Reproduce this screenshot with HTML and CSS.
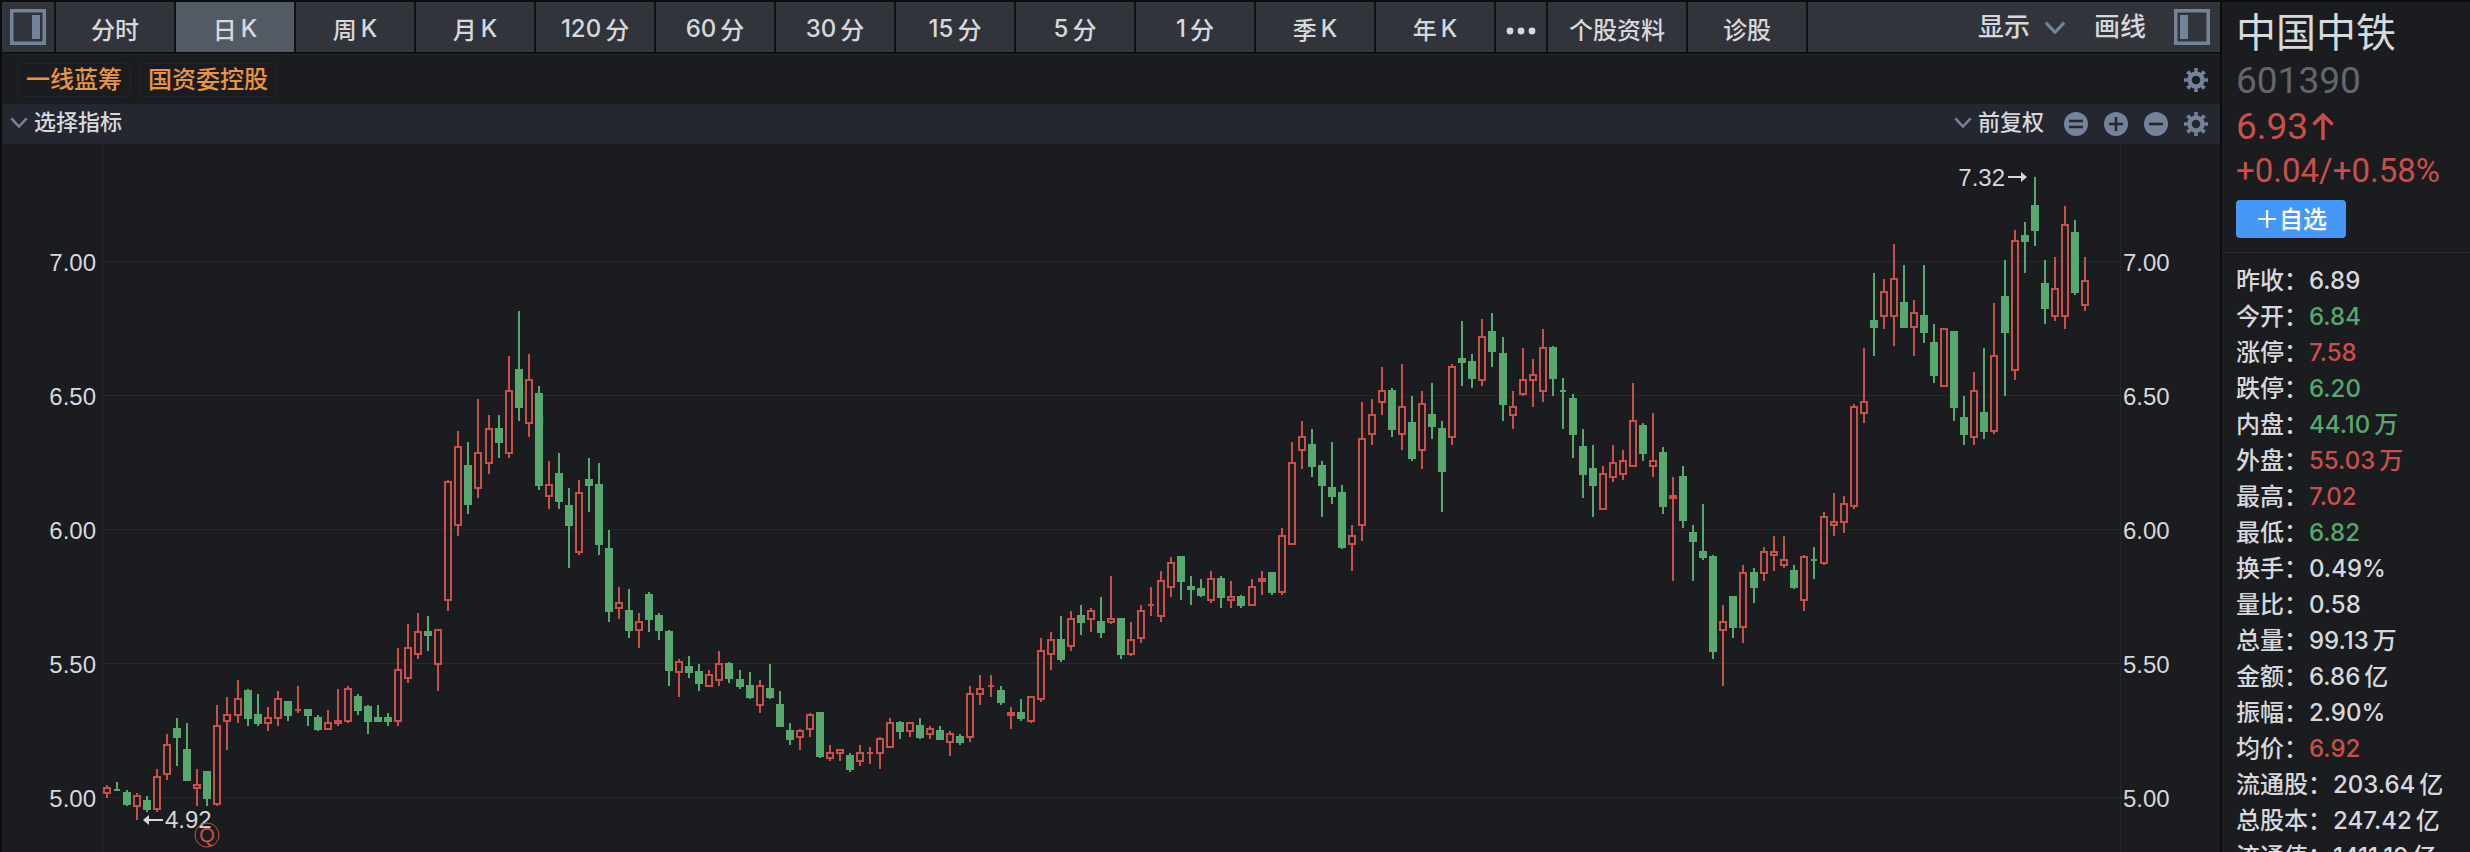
FILE: index.html
```
<!DOCTYPE html>
<html lang="zh-CN">
  <head>
    <meta charset="UTF-8" />
    <meta name="viewport" content="width=device-width, initial-scale=1.0" />
    <title>中国中铁 601390</title>
    <link rel="stylesheet" href="styles.css" />
  </head>
  <body>
    <!-- 公用图标 -->
    <svg class="defs" aria-hidden="true">
      <symbol id="gear" viewBox="0 0 24 24">
        <circle cx="12" cy="12" r="6.5" fill="none" stroke="currentColor" stroke-width="4.4" />
        <circle cx="12" cy="12" r="10" fill="none" stroke="currentColor" stroke-width="4"
          pathLength="16" stroke-dasharray="0.9 1.1" stroke-dashoffset="0.45" />
      </symbol>
      <symbol id="chevron" viewBox="0 0 20 12">
        <path d="M1.5 1.5 10 10.5 18.5 1.5" fill="none" stroke="currentColor" stroke-width="2.8" />
      </symbol>
    </svg>

    <div class="page">
      <main class="main">
        <!-- 周期切换 -->
        <nav class="toolbar">
          <button class="tab tab-icon" aria-label="左侧栏">
            <svg width="36" height="36" viewBox="0 0 36 36">
              <rect x="1.75" y="1.75" width="32.5" height="32.5" fill="none" stroke="currentColor" stroke-width="3.5" />
              <rect x="22" y="6" width="8" height="24" fill="currentColor" />
            </svg>
          </button>
          <button class="tab">分时</button>
          <button class="tab active">日<span>K</span></button>
          <button class="tab">周<span>K</span></button>
          <button class="tab">月<span>K</span></button>
          <button class="tab">120<span>分</span></button>
          <button class="tab">60<span>分</span></button>
          <button class="tab">30<span>分</span></button>
          <button class="tab">15<span>分</span></button>
          <button class="tab">5<span>分</span></button>
          <button class="tab">1<span>分</span></button>
          <button class="tab">季<span>K</span></button>
          <button class="tab">年<span>K</span></button>
          <button class="tab tab-more" aria-label="更多">
            <svg width="30" height="8" viewBox="0 0 30 8" fill="currentColor">
              <circle cx="4" cy="4" r="3.4" />
              <circle cx="15" cy="4" r="3.4" />
              <circle cx="26" cy="4" r="3.4" />
            </svg>
          </button>
          <button class="tab tab-info">个股资料</button>
          <button class="tab">诊股</button>
          <div class="tools">
            <button class="tool">
              显示
              <svg class="muted" width="22" height="13"><use href="#chevron" /></svg>
            </button>
            <button class="tool">画线</button>
            <button class="tool muted" aria-label="右侧栏">
              <svg width="36" height="36" viewBox="0 0 36 36">
                <rect x="1.75" y="1.75" width="32.5" height="32.5" fill="none" stroke="currentColor" stroke-width="3.5" />
                <rect x="6" y="6" width="8" height="24" fill="currentColor" />
              </svg>
            </button>
          </div>
        </nav>

        <!-- 标签 -->
        <div class="tags">
          <a class="tag" href="#">一线蓝筹</a>
          <a class="tag" href="#">国资委控股</a>
          <button class="icon-btn push" aria-label="标签设置">
            <svg width="24" height="24"><use href="#gear" /></svg>
          </button>
        </div>

        <!-- 指标 -->
        <div class="indicator">
          <button class="pick">
            <svg class="muted" width="18" height="11"><use href="#chevron" /></svg>
            选择指标
          </button>
          <div class="actions">
            <button class="pick">
              <svg class="muted" width="18" height="11"><use href="#chevron" /></svg>
              前复权
            </button>
            <button class="icon-btn" aria-label="还原">
              <svg width="24" height="24" viewBox="0 0 24 24">
                <circle cx="12" cy="12" r="12" fill="currentColor" />
                <path d="M5 9h14M5 15h14" stroke="#24272f" stroke-width="2.4" />
              </svg>
            </button>
            <button class="icon-btn" aria-label="放大">
              <svg width="24" height="24" viewBox="0 0 24 24">
                <circle cx="12" cy="12" r="12" fill="currentColor" />
                <path d="M5 12h14M12 5v14" stroke="#24272f" stroke-width="2.6" />
              </svg>
            </button>
            <button class="icon-btn" aria-label="缩小">
              <svg width="24" height="24" viewBox="0 0 24 24">
                <circle cx="12" cy="12" r="12" fill="currentColor" />
                <path d="M5 12h14" stroke="#24272f" stroke-width="2.6" />
              </svg>
            </button>
            <button class="icon-btn" aria-label="指标设置">
              <svg width="24" height="24"><use href="#gear" /></svg>
            </button>
          </div>
        </div>

        <!-- K 线图 -->
        <div class="chart">
          <svg id="kline" role="img" aria-label="日K线"></svg>
        </div>
      </main>

      <!-- 右侧报价 -->
      <aside class="quote">
        <header class="head">
          <h1 class="name">中国中铁</h1>
          <div class="code">601390</div>
          <div class="price up">
            6.93<svg width="22" height="28" viewBox="0 0 22 28">
              <path d="M11 27V2M1.5 11.5 11 2l9.5 9.5" fill="none" stroke="currentColor" stroke-width="3.4" />
            </svg>
          </div>
          <div class="change up">+0.04/+0.58%</div>
          <button class="add">＋自选</button>
        </header>
        <dl class="list">
          <div class="row"><dt>昨收：</dt><dd>6.89</dd></div>
          <div class="row"><dt>今开：</dt><dd class="down">6.84</dd></div>
          <div class="row"><dt>涨停：</dt><dd class="up">7.58</dd></div>
          <div class="row"><dt>跌停：</dt><dd class="down">6.20</dd></div>
          <div class="row"><dt>内盘：</dt><dd class="down">44.10<span>万</span></dd></div>
          <div class="row"><dt>外盘：</dt><dd class="up">55.03<span>万</span></dd></div>
          <div class="row"><dt>最高：</dt><dd class="up">7.02</dd></div>
          <div class="row"><dt>最低：</dt><dd class="down">6.82</dd></div>
          <div class="row"><dt>换手：</dt><dd>0.49%</dd></div>
          <div class="row"><dt>量比：</dt><dd>0.58</dd></div>
          <div class="row"><dt>总量：</dt><dd>99.13<span>万</span></dd></div>
          <div class="row"><dt>金额：</dt><dd>6.86<span>亿</span></dd></div>
          <div class="row"><dt>振幅：</dt><dd>2.90%</dd></div>
          <div class="row"><dt>均价：</dt><dd class="up">6.92</dd></div>
          <div class="row"><dt>流通股：</dt><dd>203.64<span>亿</span></dd></div>
          <div class="row"><dt>总股本：</dt><dd>247.42<span>亿</span></dd></div>
          <div class="row"><dt>流通值：</dt><dd>1411.19<span>亿</span></dd></div>
        </dl>
      </aside>
    </div>
    <script src="kline.js"></script>
  </body>
</html>
```

FILE: styles.css
```
* {
  margin: 0;
  padding: 0;
  box-sizing: border-box;
}

body {
  background-color: #1b1c20;
  color: #d6d8dc;
  font-family: Inter, "Noto Sans CJK SC", sans-serif;
  font-size: 24px;
  font-weight: 500;
  overflow: hidden;
}

button {
  border: none;
  background: none;
  color: inherit;
  font: inherit;
  cursor: pointer;
}

a {
  text-decoration: none;
}

svg {
  display: block;
  flex: none;
}

.defs {
  position: absolute;
  width: 0;
  height: 0;
}

.muted {
  color: #74829a;
}

.up {
  color: #c94f4a;
}

.down {
  color: #57a86f;
}

.page {
  display: flex;
  height: 100vh;
  border-top: 2px solid #0c0d0f;
  border-left: 2px solid #0c0d0f;
}

.main {
  flex: 1;
  min-width: 0;
  display: flex;
  flex-direction: column;
}

/* 周期切换 */
.toolbar {
  display: flex;
  gap: 2px;
  height: 52px;
  background-color: #101114;
  border-bottom: 2px solid #101114;
}

.tab {
  display: flex;
  align-items: center;
  justify-content: center;
  gap: 4px;
  width: 118px;
  padding-top: 2px;
  background-color: #31343b;
  white-space: nowrap;
}

.tab.active {
  background-color: #545a64;
}

.tab-icon {
  width: 52px;
  padding-top: 0;
  color: #74829a;
}

.tab-more {
  width: 50px;
  padding-top: 8px;
}

.tab-info {
  width: 138px;
}

.tools {
  flex: 1;
  display: flex;
  align-items: center;
  justify-content: flex-end;
  gap: 28px;
  padding-right: 10px;
  background-color: #31343b;
}

.tool {
  display: flex;
  align-items: center;
  gap: 14px;
  font-size: 26px;
  line-height: 36px;
}

/* 标签 */
.tags {
  display: flex;
  align-items: center;
  gap: 8px;
  height: 50px;
  padding: 0 12px 0 15px;
  border-top: 1px solid #26282d;
}

.tag {
  padding: 0 8px;
  border: 1px solid #222429;
  border-radius: 6px;
  color: #e8963f;
  line-height: 32px;
}

.icon-btn {
  color: #74829a;
}

.push {
  margin-left: auto;
}

/* 指标 */
.indicator {
  display: flex;
  align-items: center;
  justify-content: space-between;
  height: 40px;
  padding: 0 12px 0 8px;
  background-color: #24272f;
}

.pick {
  display: flex;
  align-items: center;
  gap: 6px;
  font-size: 22px;
  line-height: 32px;
  padding-bottom: 4px;
}

.actions {
  display: flex;
  align-items: center;
  gap: 16px;
}

.actions .pick {
  margin-right: 4px;
}

/* K 线图 */
.chart {
  flex: 1;
  min-height: 0;
}

#kline {
  width: 100%;
  height: 100%;
}

.grid {
  stroke: #26282e;
}

.axis {
  fill: #d6d8dc;
  font-family: "Liberation Sans", sans-serif;
  font-size: 24px;
  font-weight: 400;
}

.arrow {
  stroke: #d6d8dc;
  stroke-width: 2;
}

.arrow-head {
  fill: #d6d8dc;
}

.k-up {
  fill: #1b1c20;
  stroke: #c94f4a;
  stroke-width: 2;
}

.k-down {
  fill: #57a86f;
  stroke: #57a86f;
  stroke-width: 2;
}

.event {
  fill: none;
  stroke: #c94f4a;
}

.event-text {
  fill: #c94f4a;
  font-family: "Liberation Sans", sans-serif;
  font-size: 20px;
}

/* 右侧报价 */
.quote {
  width: 250px;
  border-left: 2px solid #0c0d0f;
}

.head {
  padding: 6px 0 14px 14px;
  border-bottom: 1px solid #2a2c31;
}

.name {
  font-size: 40px;
  font-weight: 400;
  line-height: 50px;
}

.code,
.price,
.change {
  font-family: Roboto, sans-serif;
  font-weight: 400;
}

.code {
  color: #63666c;
  font-size: 37px;
  line-height: 46px;
}

.price {
  display: flex;
  align-items: center;
  gap: 4px;
  font-size: 37px;
  line-height: 46px;
}

.change {
  font-size: 33px;
  line-height: 42px;
}

.add {
  display: block;
  width: 110px;
  margin-top: 8px;
  padding-top: 2px;
  border-radius: 4px;
  background-color: #4598f7;
  color: #fff;
  line-height: 36px;
}

.list {
  padding: 10px 0 0 14px;
}

.row {
  display: flex;
  line-height: 36px;
  white-space: nowrap;
}

.row dd {
  padding-left: 1px;
}

.row span {
  margin-left: 4px;
}
```

FILE: kline.js
```
// 开 高 低 收，单位：分
const data = [
  [502,505,500,504],[503,506,503,503],[502,503,497,498],[497,502,492,501],[499,501,495,496],[496,511,495,508],
  [509,524,507,520],[526,530,512,523],[518,528,507,507],[504,511,497,505],[510,510,497,500],[498,535,497,527],
  [529,538,518,531],[531,544,528,537],[540,541,527,530],[531,539,527,528],[528,534,525,530],[530,540,527,537],
  [536,536,529,531],[533,542,532,533],[533,533,527,531],[530,531,525,526],[526,533,526,528],[528,541,527,529],
  [529,542,528,541],[538,539,531,533],[534,535,524,529],[530,535,529,529],[530,532,527,529],[529,556,527,548],
  [545,565,543,556],[554,569,552,562],[562,568,555,561],[550,563,540,563],[574,619,570,618],[602,637,598,631],
  [624,633,606,610],[616,649,612,629],[625,643,621,638],[638,643,627,633],[629,665,627,652],[660,682,641,646],
  [640,666,635,656],[651,654,615,617],[613,626,608,617],[621,629,608,611],[609,616,586,602],[592,619,591,614],
  [619,627,607,617],[617,625,591,595],[593,600,566,570],[571,579,567,573],[570,578,560,563],[563,569,556,566],
  [576,577,562,567],[568,569,559,563],[562,563,542,548],[547,552,538,551],[549,553,545,547],[547,550,540,543],
  [542,548,542,546],[544,555,542,550],[550,551,543,545],[544,548,541,542],[542,547,537,538],[535,544,532,542],
  [541,550,537,538],[535,540,527,527],[525,528,520,522],[523,526,518,525],[526,532,523,531],[532,532,515,516],
  [515,520,514,517],[517,518,514,518],[516,517,510,511],[514,520,512,517],[517,519,513,517],[517,523,511,522],
  [519,530,519,528],[528,529,522,525],[525,528,523,528],[527,530,522,523],[524,527,522,526],[525,527,522,522],
  [521,525,516,524],[523,524,520,521],[523,542,521,539],[539,546,535,541],[542,546,538,542],[540,542,535,536],
  [531,534,526,532],[532,537,529,530],[529,538,528,538],[537,560,536,555],[554,562,548,559],[559,568,551,552],
  [557,570,555,567],[568,572,561,566],[567,571,562,570],[566,575,560,562],[566,583,565,567],[567,567,552,554],
  [554,566,553,559],[560,572,558,570],[572,579,568,572],[568,585,566,581],[579,590,575,588],[590,590,574,581],
  [579,583,572,578],[578,582,575,576],[574,585,573,582],[582,583,571,575],[574,581,571,575],[575,576,571,572],
  [572,582,572,579],[581,585,576,582],[584,584,576,577],[577,601,576,598],[595,633,595,625],[630,641,623,635],
  [632,638,620,624],[624,626,605,617],[616,633,610,613],[614,617,593,594],[595,602,585,598],[602,648,596,634],
  [636,649,632,643],[648,661,643,652],[652,653,635,638],[636,662,630,646],[640,650,626,627],[630,652,623,647],
  [643,655,634,639],[638,641,607,622],[635,662,632,661],[664,678,654,663],[663,666,653,657],[656,679,654,672],
  [674,681,661,667],[666,672,641,647],[643,652,638,646],[651,668,650,656],[656,664,646,658],[652,675,648,668],
  [668,669,650,657],[652,657,638,652],[649,651,627,636],[631,638,612,621],[623,632,605,617],[608,624,608,621],
  [620,632,618,625],[621,630,619,626],[624,655,624,641],[639,640,626,629],[624,644,620,626],[629,631,606,609],
  [612,620,581,613],[620,624,601,604],[599,602,581,596],[592,610,589,590],[590,591,552,555],[563,572,542,566],
  [575,575,560,564],[564,587,558,584],[584,586,573,579],[584,594,581,592],[591,598,585,592],[587,598,586,589],
  [585,587,578,579],[574,591,570,590],[589,594,582,589],[588,607,587,605],[602,614,598,603],[603,613,599,610],
  [609,647,608,646],[644,668,640,648],[678,696,665,676],[680,694,675,689],[680,707,669,694],[685,699,676,676],
  [676,686,665,681],[680,699,670,674],[670,677,655,658],[654,675,654,675],[674,674,641,646],[642,650,632,636],
  [635,659,632,652],[644,668,634,637],[637,685,636,665],[687,701,650,674],[660,712,656,708],[710,715,696,708],
  [721,732,706,712],[692,701,677,683],[680,702,678,690],[680,721,675,714],[711,716,688,689],[684,702,682,693]
];

const svg = document.getElementById("kline");
const PAD = 100; // 两侧价格轴宽度
const SLOTS = 201;
const MAX = 744.2;
const MIN = 480;
const EVENT = 10; // 财报标记所在的 K 线

function add(name, attrs, text) {
  const el = document.createElementNS("http://www.w3.org/2000/svg", name);
  for (const key in attrs) el.setAttribute(key, attrs[key]);
  if (text) el.textContent = text;
  svg.appendChild(el);
}

function draw() {
  const w = svg.clientWidth;
  const h = svg.clientHeight;
  const step = (w - PAD * 2) / SLOTS;
  const getX = (i) => PAD + 5 + Math.round(i * step);
  const getY = (p) => Math.round(((MAX - p) / (MAX - MIN)) * h);
  svg.innerHTML = "";

  // 网格和价格轴
  [700, 650, 600, 550, 500].forEach((p) => {
    const y = getY(p) - 0.5;
    const label = (p / 100).toFixed(2);
    add("line", { class: "grid", x1: PAD, x2: w - PAD, y1: y, y2: y });
    add("text", { class: "axis", x: PAD - 6, y: y + 9, "text-anchor": "end" }, label);
    add("text", { class: "axis", x: w - PAD + 3, y: y + 9 }, label);
  });
  [PAD + 0.5, w - PAD + 0.5].forEach((x) => {
    add("line", { class: "grid", x1: x, x2: x, y1: 0, y2: h });
  });

  // K 线
  data.forEach(([open, high, low, close], i) => {
    const prev = i ? data[i - 1][3] : open;
    const up = close === open ? close >= prev : close > open;
    const cls = up ? "k-up" : "k-down";
    const x = getX(i);
    const top = getY(Math.max(open, close));
    const bottom = getY(Math.min(open, close));
    add("path", { class: cls, d: `M${x} ${getY(high)}V${top}M${x} ${bottom}V${getY(low)}` });
    if (top === bottom) {
      add("path", { class: cls, d: `M${x - 3} ${top}h6` });
    } else {
      add("rect", { class: cls, x: x - 3, y: top, width: 6, height: bottom - top });
    }
  });

  // 最高价、最低价
  const hi = data.findIndex((d) => d[1] === Math.max(...data.map((k) => k[1])));
  const lo = data.findIndex((d) => d[2] === Math.min(...data.map((k) => k[2])));
  const hx = getX(hi) - 8;
  const hy = getY(data[hi][1]);
  add("line", { class: "arrow", x1: hx - 19, x2: hx - 4, y1: hy, y2: hy });
  add("path", { class: "arrow-head", d: `M${hx} ${hy}l-6 -5v10z` });
  add("text", { class: "axis", x: hx - 22, y: hy + 9, "text-anchor": "end" }, (data[hi][1] / 100).toFixed(2));
  const lx = getX(lo) + 6;
  const ly = getY(data[lo][2]);
  add("line", { class: "arrow", x1: lx + 4, x2: lx + 20, y1: ly, y2: ly });
  add("path", { class: "arrow-head", d: `M${lx} ${ly}l6 -5v10z` });
  add("text", { class: "axis", x: lx + 22, y: ly + 8 }, (data[lo][2] / 100).toFixed(2));

  // 财报
  const ex = getX(EVENT);
  add("circle", { class: "event", cx: ex, cy: h - 17, r: 12 });
  add("text", { class: "event-text", x: ex, y: h - 10, "text-anchor": "middle" }, "Q");
}

draw();
window.addEventListener("resize", draw);
```
